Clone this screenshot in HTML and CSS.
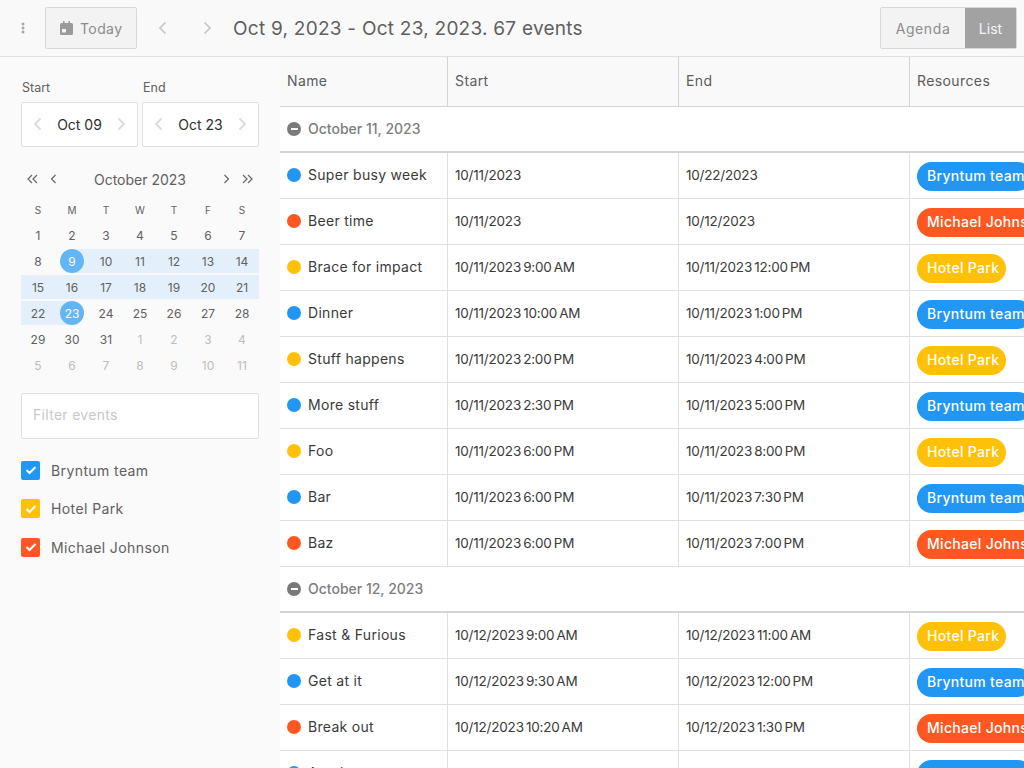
FILE: index.html

```html
<!DOCTYPE html>
<html lang="en">
<head>
  <meta charset="UTF-8">
  <title>Calendar list</title>
  <link rel="stylesheet" href="styles.css">
</head>
<body>
  <!-- Toolbar -->
  <header class="toolbar">
    <svg class="dots" width="4" height="12" viewBox="0 0 4 12"><circle cx="2" cy="2" r="1.500"/><circle cx="2" cy="6" r="1.500"/><circle cx="2" cy="10" r="1.500"/></svg>
    <button class="today-btn">
      <svg width="13" height="14" viewBox="0 0 13 14"><path d="M3 0h1.600v2h3.800V0H10v2h1.500A1.500 1.500 0 0 1 13 3.500V12.500A1.500 1.500 0 0 1 11.500 14h-10A1.500 1.500 0 0 1 0 12.500V3.500A1.500 1.500 0 0 1 1.500 2H3z M2 8v3.500h4V8z" fill-rule="evenodd"/></svg>
      Today
    </button>
    <svg class="chev nav-prev" width="9" height="14" viewBox="0 0 9 14"><path d="M7.500 1.500 2 7l5.500 5.500"/></svg>
    <svg class="chev nav-next" width="9" height="14" viewBox="0 0 9 14"><path d="M1.500 1.500 7 7l-5.500 5.500"/></svg>
    <h1 class="range">Oct 9, 2023 - Oct 23, 2023. 67 events</h1>
    <div class="mode">
      <span class="mode-item">Agenda</span>
      <span class="mode-item active">List</span>
    </div>
  </header>

  <div class="main">
    <!-- Sidebar -->
    <aside class="sidebar">
      <div class="fields">
        <div class="field">
          <label>Start</label>
          <div class="date-input">
            <svg class="chev" width="9" height="14" viewBox="0 0 9 14"><path d="M7.500 1.500 2 7l5.500 5.500"/></svg>
            <span>Oct 09</span>
            <svg class="chev" width="9" height="14" viewBox="0 0 9 14"><path d="M1.500 1.500 7 7l-5.500 5.500"/></svg>
          </div>
        </div>
        <div class="field">
          <label>End</label>
          <div class="date-input">
            <svg class="chev" width="9" height="14" viewBox="0 0 9 14"><path d="M7.500 1.500 2 7l5.500 5.500"/></svg>
            <span>Oct 23</span>
            <svg class="chev" width="9" height="14" viewBox="0 0 9 14"><path d="M1.500 1.500 7 7l-5.500 5.500"/></svg>
          </div>
        </div>
      </div>

      <div class="month-nav">
        <svg class="mini" width="11" height="10" viewBox="0 0 11 10"><path d="M5 1 1 5l4 4M10 1 6 5l4 4"/></svg>
        <svg class="mini second" width="7" height="10" viewBox="0 0 7 10"><path d="M5.500 1 1.500 5l4 4"/></svg>
        <span class="month-title">October 2023</span>
        <svg class="mini third" width="7" height="10" viewBox="0 0 7 10"><path d="M1.500 1l4 4-4 4"/></svg>
        <svg class="mini" width="11" height="10" viewBox="0 0 11 10"><path d="M1 1l4 4-4 4M6 1l4 4-4 4"/></svg>
      </div>

      <div class="cal cal-head">
        <span>S</span><span>M</span><span>T</span><span>W</span><span>T</span><span>F</span><span>S</span>
      </div>
      <div class="cal">
        <span>1</span><span>2</span><span>3</span><span>4</span><span>5</span><span>6</span><span>7</span>
      </div>
      <div class="cal">
        <span>8</span><span class="in-range start"><b>9</b></span><span class="in-range">10</span><span class="in-range">11</span><span class="in-range">12</span><span class="in-range">13</span><span class="in-range">14</span>
      </div>
      <div class="cal">
        <span class="in-range">15</span><span class="in-range">16</span><span class="in-range">17</span><span class="in-range">18</span><span class="in-range">19</span><span class="in-range">20</span><span class="in-range">21</span>
      </div>
      <div class="cal">
        <span class="in-range">22</span><span class="in-range end"><b>23</b></span><span>24</span><span>25</span><span>26</span><span>27</span><span>28</span>
      </div>
      <div class="cal">
        <span>29</span><span>30</span><span>31</span><span class="other">1</span><span class="other">2</span><span class="other">3</span><span class="other">4</span>
      </div>
      <div class="cal">
        <span class="other">5</span><span class="other">6</span><span class="other">7</span><span class="other">8</span><span class="other">9</span><span class="other">10</span><span class="other">11</span>
      </div>

      <input class="filter" type="text" placeholder="Filter events">

      <ul class="resources">
        <li><i class="check blue"><svg width="12" height="10" viewBox="0 0 12 10"><path d="M1.500 5 4.500 8 10.500 2"/></svg></i>Bryntum team</li>
        <li><i class="check yellow"><svg width="12" height="10" viewBox="0 0 12 10"><path d="M1.500 5 4.500 8 10.500 2"/></svg></i>Hotel Park</li>
        <li><i class="check orange"><svg width="12" height="10" viewBox="0 0 12 10"><path d="M1.500 5 4.500 8 10.500 2"/></svg></i>Michael Johnson</li>
      </ul>
    </aside>

    <!-- Grid -->
    <section class="grid">
      <div class="row head">
        <div>Name</div><div>Start</div><div>End</div><div>Resources</div>
      </div>

      <div class="group"><i class="minus"></i>October 11, 2023</div>
      <div class="row"><div><i class="dot blue"></i>Super busy week</div><div>10/11/2023</div><div>10/22/2023</div><div><span class="tag blue">Bryntum team</span></div></div>
      <div class="row"><div><i class="dot orange"></i>Beer time</div><div>10/11/2023</div><div>10/12/2023</div><div><span class="tag orange">Michael Johnson</span></div></div>
      <div class="row"><div><i class="dot yellow"></i>Brace for impact</div><div>10/11/2023 9:00 AM</div><div>10/11/2023 12:00 PM</div><div><span class="tag yellow">Hotel Park</span></div></div>
      <div class="row"><div><i class="dot blue"></i>Dinner</div><div>10/11/2023 10:00 AM</div><div>10/11/2023 1:00 PM</div><div><span class="tag blue">Bryntum team</span></div></div>
      <div class="row"><div><i class="dot yellow"></i>Stuff happens</div><div>10/11/2023 2:00 PM</div><div>10/11/2023 4:00 PM</div><div><span class="tag yellow">Hotel Park</span></div></div>
      <div class="row"><div><i class="dot blue"></i>More stuff</div><div>10/11/2023 2:30 PM</div><div>10/11/2023 5:00 PM</div><div><span class="tag blue">Bryntum team</span></div></div>
      <div class="row"><div><i class="dot yellow"></i>Foo</div><div>10/11/2023 6:00 PM</div><div>10/11/2023 8:00 PM</div><div><span class="tag yellow">Hotel Park</span></div></div>
      <div class="row"><div><i class="dot blue"></i>Bar</div><div>10/11/2023 6:00 PM</div><div>10/11/2023 7:30 PM</div><div><span class="tag blue">Bryntum team</span></div></div>
      <div class="row"><div><i class="dot orange"></i>Baz</div><div>10/11/2023 6:00 PM</div><div>10/11/2023 7:00 PM</div><div><span class="tag orange">Michael Johnson</span></div></div>

      <div class="group"><i class="minus"></i>October 12, 2023</div>
      <div class="row"><div><i class="dot yellow"></i>Fast &amp; Furious</div><div>10/12/2023 9:00 AM</div><div>10/12/2023 11:00 AM</div><div><span class="tag yellow">Hotel Park</span></div></div>
      <div class="row"><div><i class="dot blue"></i>Get at it</div><div>10/12/2023 9:30 AM</div><div>10/12/2023 12:00 PM</div><div><span class="tag blue">Bryntum team</span></div></div>
      <div class="row"><div><i class="dot orange"></i>Break out</div><div>10/12/2023 10:20 AM</div><div>10/12/2023 1:30 PM</div><div><span class="tag orange">Michael Johnson</span></div></div>
      <div class="row"><div><i class="dot blue"></i>Another event</div><div>10/12/2023 11:00 AM</div><div>10/12/2023 2:00 PM</div><div><span class="tag blue">Bryntum team</span></div></div>
    </section>
  </div>
</body>
</html>
```

FILE: styles.css

```css
* {
  box-sizing: border-box;
}

html,
body {
  height: 100%;
}

body {
  margin: 0;
  overflow: hidden;
  background-color: #fafafa;
  color: #606060;
  font-family: Inter, "Liberation Sans", sans-serif;
  font-size: 14px;
}

svg {
  display: block;
  flex: none;
}

/* Toolbar */
.toolbar {
  display: flex;
  align-items: center;
  height: 57px;
  padding: 7px 7px 7px 21px;
  background-color: #f9f9f9;
  border-bottom: 1px solid #e0e0e0;
}

.dots {
  fill: #a8a8a8;
  margin-right: 20px;
}

.today-btn {
  display: flex;
  align-items: center;
  gap: 7px;
  width: 92px;
  height: 42px;
  padding: 0 14px;
  background-color: #f3f3f3;
  border: 1px solid #d8d8d8;
  border-radius: 2px;
  color: #8c8c8c;
  font: inherit;
  font-size: 14px;
  letter-spacing: 0.4px;
}

.today-btn svg {
  fill: #9a9a9a;
}

.chev {
  fill: none;
  stroke: #c4c4c4;
  stroke-width: 1.600;
}

.nav-prev {
  margin-left: 21px;
}

.nav-next {
  margin-left: 36px;
}

.range {
  margin: 0 0 0 21px;
  flex: 1;
  color: #606060;
  font-size: 19px;
  font-weight: 400;
  letter-spacing: 0.25px;
  white-space: nowrap;
}

.mode {
  display: flex;
  height: 42px;
  border: 1px solid #d8d8d8;
  border-radius: 2px;
}

.mode-item {
  display: flex;
  align-items: center;
  justify-content: center;
  width: 84px;
  background-color: #f3f3f3;
  color: #8c8c8c;
  letter-spacing: 0.6px;
}

.mode-item.active {
  width: 51px;
  background-color: #a2a2a2;
  color: #f5f5f5;
  letter-spacing: 0;
}

.main {
  display: flex;
  height: calc(100% - 57px);
}

/* Sidebar */
.sidebar {
  flex: none;
  width: 280px;
  padding: 24px 21px 0;
}

.fields {
  display: flex;
  gap: 4px;
}

.field {
  width: 117px;
}

.field label {
  display: block;
  height: 21px;
  padding-left: 1px;
  font-size: 12.500px;
  line-height: 14px;
}

.date-input {
  display: flex;
  align-items: center;
  justify-content: space-between;
  height: 45px;
  padding: 0 11px 1px;
  background-color: #fff;
  border: 1px solid #e0e0e0;
  border-radius: 2px;
  color: #2e2e2e;
}

.date-input .chev {
  stroke: #dcdcdc;
  stroke-width: 1.800;
}

.month-nav {
  display: flex;
  align-items: center;
  height: 20px;
  margin-top: 22px;
  padding: 0 6px;
  font-size: 14px;
}

.mini {
  fill: none;
  stroke: #666;
  stroke-width: 1.200;
}

.mini.second {
  margin-left: 12px;
}

.mini.third {
  margin-right: 12px;
}

.month-title {
  flex: 1;
  text-align: center;
}

.cal {
  display: grid;
  grid-template-columns: repeat(7, 34px);
  height: 26px;
  align-items: center;
  text-align: center;
  font-size: 12px;
}

.cal-head {
  height: 24px;
  margin-top: 9px;
  font-size: 10px;
}

.cal span {
  display: flex;
  align-items: center;
  justify-content: center;
  height: 24px;
}

.cal .in-range {
  background-color: #e3f0fb;
}

.cal .start {
  background: linear-gradient(to right, transparent 50%, #e3f0fb 50%);
}

.cal .end {
  background: linear-gradient(to right, #e3f0fb 50%, transparent 50%);
}

.cal b {
  display: flex;
  align-items: center;
  justify-content: center;
  width: 24px;
  height: 24px;
  border-radius: 50%;
  background-color: #64b5f6;
  color: #fff;
  font-weight: 400;
}

.cal .other {
  color: #bdbdbd;
}

.filter {
  display: block;
  width: 100%;
  height: 46px;
  margin-top: 15px;
  padding: 0 11px 3px;
  background-color: #fff;
  border: 1px solid #e0e0e0;
  border-radius: 2px;
  font: inherit;
  letter-spacing: 0.3px;
}

.filter::placeholder {
  color: #c8c8c8;
}

.resources {
  margin: 22px 0 0;
  padding: 0;
  list-style: none;
}

.resources li {
  display: flex;
  align-items: center;
  gap: 11px;
  height: 18px;
  margin-bottom: 20.500px;
  letter-spacing: 0.4px;
}

.check {
  display: flex;
  align-items: center;
  justify-content: center;
  width: 19px;
  height: 19px;
  border-radius: 2px;
}

.check svg {
  fill: none;
  stroke: #fff;
  stroke-width: 2;
}

.blue {
  background-color: #2196f3;
}

.yellow {
  background-color: #ffc107;
}

.orange {
  background-color: #ff5722;
}

/* Grid */
.grid {
  flex: 1;
  min-width: 0;
  overflow: hidden;
  background-color: #fff;
}

.row {
  display: grid;
  grid-template-columns: 168px 231px 231px 1fr;
  height: 46px;
  border-bottom: 1px solid #e0e0e0;
  color: #3a3a3a;
  letter-spacing: 0.3px;
}

.row > div {
  display: flex;
  align-items: center;
  padding: 0 0 1px 7px;
  border-right: 1px solid #e0e0e0;
  white-space: nowrap;
  overflow: hidden;
}

.row > div:first-child {
  padding-bottom: 2px;
}

.row > div:last-child {
  border-right: none;
}

/* the date columns run narrower than the names */
.row:not(.head) > div:nth-child(2),
.row:not(.head) > div:nth-child(3) {
  font-size: 13.500px;
  letter-spacing: -0.2px;
  word-spacing: -1.500px;
}

.row.head {
  height: 50px;
  background-color: #f9f9f9;
  border-bottom-color: #d4d4d4;
  color: #5c5c5c;
  letter-spacing: 0.4px;
}

.row.head > div {
  padding-bottom: 2px;
  border-right-color: #d4d4d4;
}

.group {
  display: flex;
  align-items: center;
  gap: 7px;
  height: 46px;
  padding: 0 0 1px 7px;
  border-bottom: 2px solid #d4d4d4;
  color: #7d7d7d;
  font-weight: 500;
}

.minus {
  position: relative;
  width: 14px;
  height: 14px;
  border-radius: 50%;
  background-color: #7a7a7a;
}

.minus::after {
  content: "";
  position: absolute;
  left: 3.500px;
  top: 6px;
  width: 7px;
  height: 2px;
  background-color: #fff;
}

.dot {
  flex: none;
  width: 14px;
  height: 14px;
  margin-right: 7px;
  border-radius: 50%;
}

.tag {
  margin-top: 2px;
  padding: 0 7px 0 10px;
  height: 29px;
  line-height: 28px;
  border-radius: 15px;
  color: #fff;
  font-weight: 500;
}
```
